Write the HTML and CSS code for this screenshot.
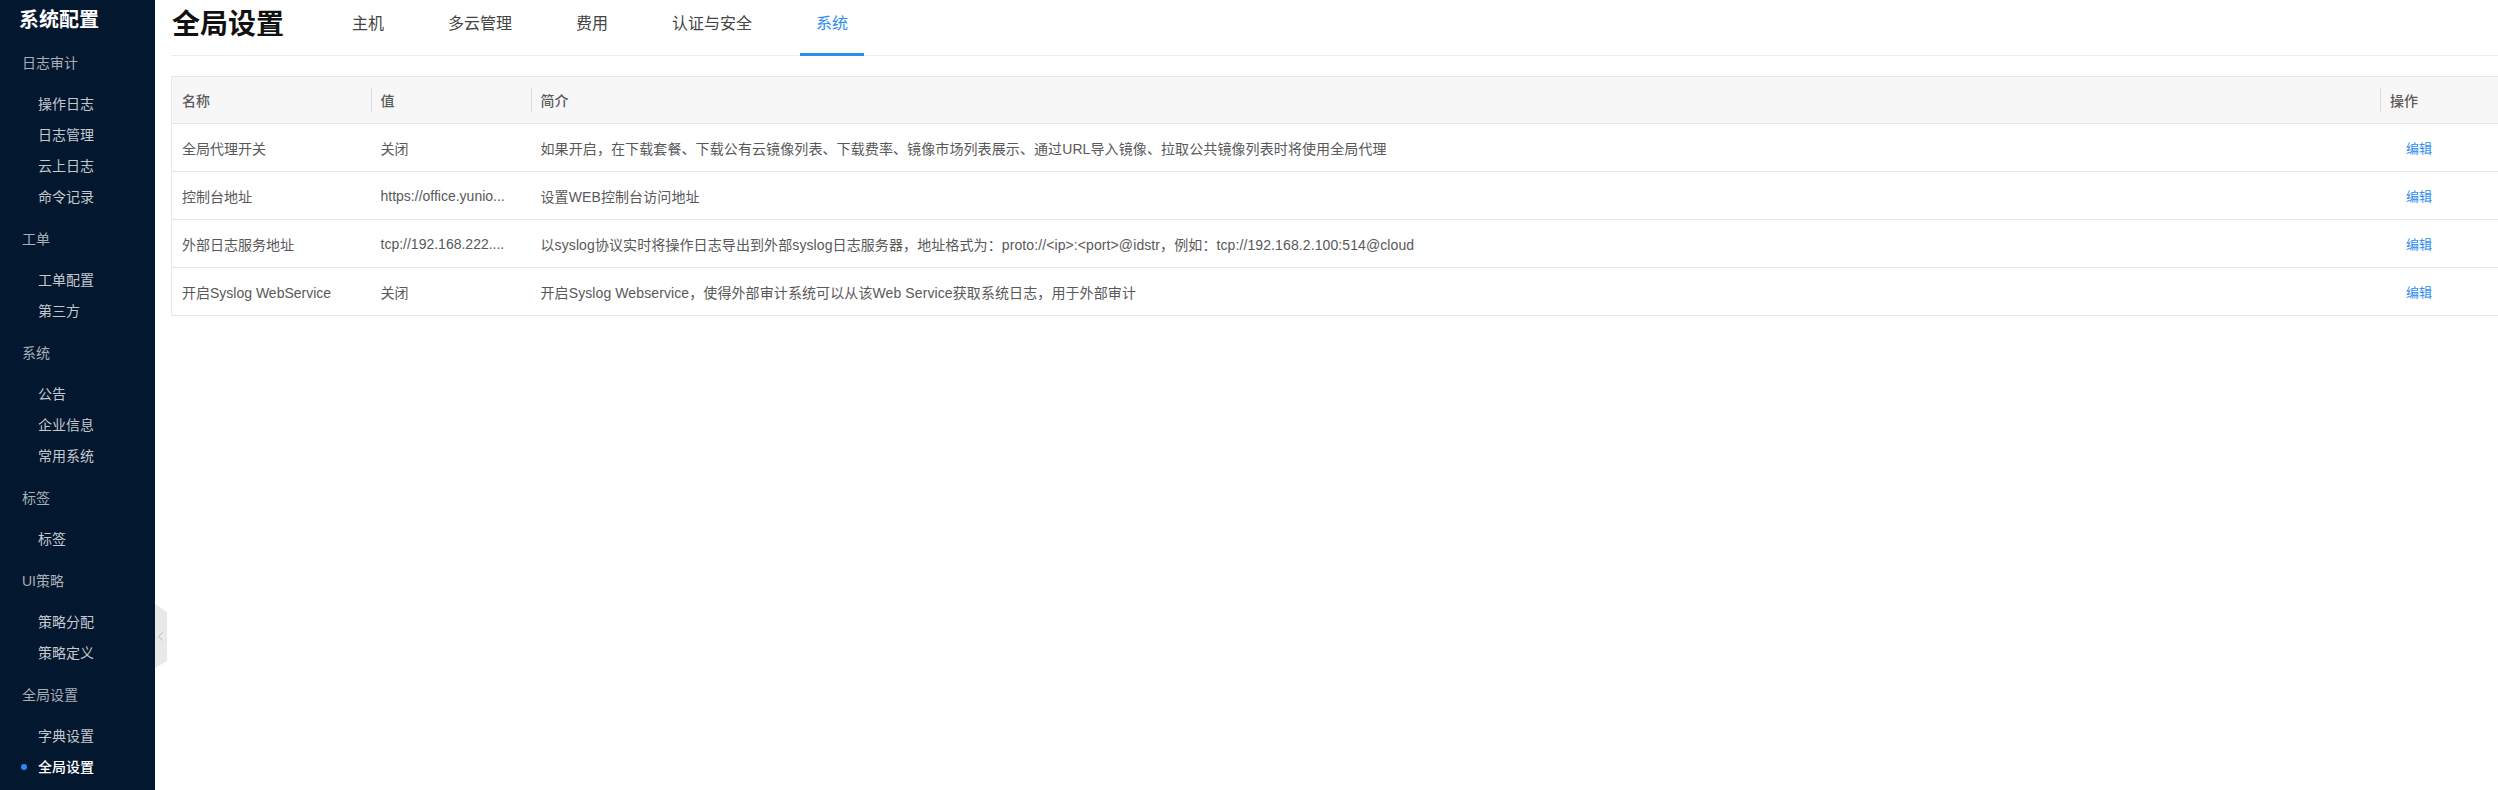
FILE: index.html
```html
<!DOCTYPE html>
<html lang="zh-CN">
<head>
<meta charset="utf-8">
<title>全局设置</title>
<link rel="stylesheet" href="styles.css">
</head>
<body>
<div class="layout">
  <aside class="sidebar">
    <div class="side-title">系统配置</div>
    <div class="group">
      <div class="group-head">日志审计</div>
      <div class="item">操作日志</div>
      <div class="item">日志管理</div>
      <div class="item">云上日志</div>
      <div class="item">命令记录</div>
    </div>
    <div class="group">
      <div class="group-head">工单</div>
      <div class="item">工单配置</div>
      <div class="item">第三方</div>
    </div>
    <div class="group">
      <div class="group-head">系统</div>
      <div class="item">公告</div>
      <div class="item">企业信息</div>
      <div class="item">常用系统</div>
    </div>
    <div class="group">
      <div class="group-head">标签</div>
      <div class="item">标签</div>
    </div>
    <div class="group">
      <div class="group-head">UI策略</div>
      <div class="item">策略分配</div>
      <div class="item">策略定义</div>
    </div>
    <div class="group">
      <div class="group-head">全局设置</div>
      <div class="item">字典设置</div>
      <div class="item active">全局设置</div>
    </div>
    <div class="collapse-tab">
      <svg width="12" height="64" viewBox="0 0 12 64"><polyline points="7.5,28.5 3.5,32.5 7.5,36.5" fill="none" stroke="#b9b9b9" stroke-width="1"/></svg>
    </div>
  </aside>
  <main class="main">
    <header class="page-head">
      <h1 class="page-title">全局设置</h1>
      <nav class="tabs">
        <div class="tab">主机</div>
        <div class="tab">多云管理</div>
        <div class="tab">费用</div>
        <div class="tab">认证与安全</div>
        <div class="tab active">系统</div>
      </nav>
    </header>
    <table class="grid">
      <colgroup>
        <col class="c-name">
        <col class="c-value">
        <col class="c-desc">
        <col class="c-op">
      </colgroup>
      <thead>
        <tr><th>名称</th><th>值</th><th>简介</th><th>操作</th></tr>
      </thead>
      <tbody>
        <tr>
          <td>全局代理开关</td>
          <td>关闭</td>
          <td class="desc">如果开启，在下载套餐、下载公有云镜像列表、下载费率、镜像市场列表展示、通过URL导入镜像、拉取公共镜像列表时将使用全局代理</td>
          <td class="op"><a class="edit">编辑</a></td>
        </tr>
        <tr>
          <td>控制台地址</td>
          <td>https://office.yunio...</td>
          <td class="desc">设置WEB控制台访问地址</td>
          <td class="op"><a class="edit">编辑</a></td>
        </tr>
        <tr>
          <td>外部日志服务地址</td>
          <td>tcp://192.168.222....</td>
          <td class="desc">以syslog协议实时将操作日志导出到外部syslog日志服务器，地址格式为：proto://&lt;ip&gt;:&lt;port&gt;@idstr，例如：tcp://192.168.2.100:514@cloud</td>
          <td class="op"><a class="edit">编辑</a></td>
        </tr>
        <tr>
          <td>开启Syslog WebService</td>
          <td>关闭</td>
          <td class="desc">开启Syslog Webservice，使得外部审计系统可以从该Web Service获取系统日志，用于外部审计</td>
          <td class="op"><a class="edit">编辑</a></td>
        </tr>
      </tbody>
    </table>
  </main>
</div>
</body>
</html>
```

FILE: styles.css
```css
* { box-sizing: border-box; }
html, body { margin: 0; padding: 0; }
body {
  font-family: "Liberation Sans", "Noto Sans CJK SC", sans-serif;
  background: #fff;
  color: #595959;
}
.layout {
  display: flex;
  height: 790px;
  overflow: hidden;
}
.sidebar {
  position: relative;
  width: 155px;
  flex: 0 0 155px;
  background: #03172f;
}
.side-title {
  height: 37px;
  padding: 3px 0 0 19px;
  line-height: 34px;
  font-size: 20px;
  font-weight: 700;
  color: #fff;
}
.group-head {
  height: 52px;
  line-height: 52px;
  padding-left: 22px;
  font-size: 14px;
  color: #a8aeb6;
}
.item {
  position: relative;
  height: 31px;
  line-height: 31px;
  padding-left: 38px;
  font-size: 14px;
  color: #c4c8ce;
}
.item.active {
  color: #fff;
  font-weight: 500;
}
.item.active::before {
  content: "";
  position: absolute;
  left: 21px;
  top: 12px;
  width: 6px;
  height: 6px;
  border-radius: 50%;
  background: #2d8cf0;
}
.collapse-tab {
  position: absolute;
  left: 155px;
  top: 604px;
  width: 12px;
  height: 64px;
  background: #e9e9e9;
  clip-path: polygon(0 0, 100% 8px, 100% 57px, 0 100%);
  z-index: 2;
}
.collapse-tab svg { display: block; }
.main {
  flex: 1;
  min-width: 0;
  padding-left: 16px;
}
.page-head {
  display: flex;
  align-items: flex-start;
  height: 56px;
  border-bottom: 1px solid #ececec;
}
.page-title {
  margin: 0 52px 0 1px;
  height: 50px;
  line-height: 50px;
  font-size: 28px;
  font-weight: 700;
  color: #111;
}
.tabs {
  display: flex;
  gap: 32px;
}
.tab {
  height: 56px;
  margin-bottom: -1px;
  padding: 0 16px;
  line-height: 48px;
  font-size: 16px;
  color: #444;
}
.tab.active {
  color: #2d8cf0;
  border-bottom: 3px solid #2d8cf0;
}
.grid {
  margin-top: 20px;
  width: 100%;
  border-collapse: collapse;
  table-layout: fixed;
  font-size: 14px;
  border-left: 1px solid #e8e8e8;
}
.c-name { width: 199px; }
.c-value { width: 160px; }
.c-op { width: 118px; }
.grid th {
  position: relative;
  height: 47px;
  padding: 0 10px;
  text-align: left;
  font-weight: 500;
  color: #5c5c5c;
  background: #f7f7f7;
  border-top: 1px solid #e6e6e6;
  border-bottom: 1px solid #e6e6e6;
}
.grid th + th::before {
  content: "";
  position: absolute;
  left: 0;
  top: 11px;
  bottom: 11px;
  width: 1px;
  background: #dedede;
}
.grid td {
  height: 48px;
  padding: 0 10px;
  color: #595959;
  border-bottom: 1px solid #e6e6e6;
  white-space: nowrap;
  overflow: hidden;
}
.grid td.desc { letter-spacing: 0.1px; }
.grid td.op { padding-left: 26px; }
.edit {
  color: #2d8cf0;
  font-size: 13px;
  cursor: pointer;
}
```
